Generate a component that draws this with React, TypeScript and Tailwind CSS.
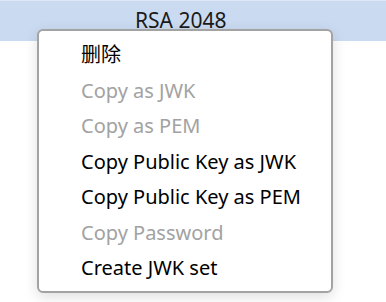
const items = [
  { label: "删除", disabled: false },
  { label: "Copy as JWK", disabled: true },
  { label: "Copy as PEM", disabled: true },
  { label: "Copy Public Key as JWK", disabled: false },
  { label: "Copy Public Key as PEM", disabled: false },
  { label: "Copy Password", disabled: true },
  { label: "Create JWK set", disabled: false },
];

export default function App() {
  return (
    <div
      className="relative h-[302px] w-[386px] overflow-hidden bg-white"
      style={{ fontFamily: '"Noto Sans", "Noto Sans CJK SC", sans-serif' }}
    >
      {/* selected row */}
      <div className="h-[41px] border-t border-[#dde7f5] bg-[#cadaf0] pl-[135px] text-[21px] leading-[39px] text-[#1a1a1a]">
        RSA 2048
      </div>

      {/* context menu */}
      <div className="absolute left-[37px] top-[29px] w-[296px] rounded-[6px] border-2 border-[#a3a3a3] bg-white pt-[6px] pb-[5px] shadow-[0_4px_14px_rgba(0,0,0,0.13)]">
        {items.map((item) => (
          <div
            key={item.label}
            className={`h-[35.5px] pl-[42px] text-[20px] leading-[35.5px] ${
              item.disabled ? "text-[#a2a2a2]" : "text-black"
            }`}
          >
            {item.label}
          </div>
        ))}
      </div>
    </div>
  );
}
